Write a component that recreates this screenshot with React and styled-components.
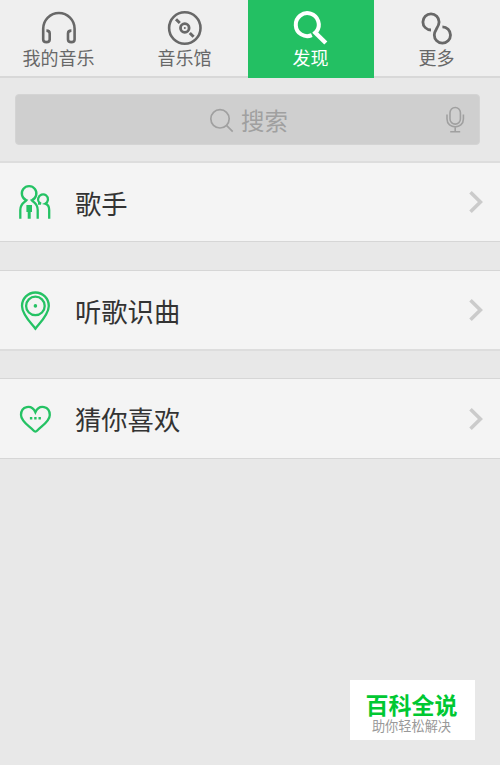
import React from 'react'
import styled, { createGlobalStyle } from 'styled-components'

const GlobalStyle = createGlobalStyle`
    * {
        box-sizing: border-box;
    }

    body {
        margin: 0;
        background: #e8e8e8;
        font-family: "Noto Sans CJK SC", "Noto Sans", sans-serif;
    }
`

const Container = styled.div`
    position: relative;
    height: 765px;
    overflow: hidden;
    background: #e8e8e8;
`

const TabBar = styled.nav`
    display: grid;
    grid-template-columns: 122px 126px 126px 126px;
    height: 78px;
    background: linear-gradient(#efefef 76px, #d8d8d8 76px);
`

const Tab = styled.div`
    display: flex;
    flex-direction: column;
    align-items: center;
    padding-top: 8px;
    height: ${props => (props.$active ? '77.5px' : '76px')};
    color: ${props => (props.$active ? '#ffffff' : '#686868')};
    background: ${props => (props.$active ? '#23c063' : 'transparent')};

    &:first-child {
        padding-right: 4px;
    }
`

const TabIcon = styled.svg`
    width: 40px;
    height: 40px;
    fill: none;
    stroke: currentColor;
    stroke-width: 2.6;
`

const TabLabel = styled.span`
    margin-right: 1px;
    font-size: 18px;
    line-height: 19px;
`

const SearchArea = styled.div`
    padding: 16px 20px 16px 15px;
    height: 83px;
`

const SearchBox = styled.div`
    display: flex;
    align-items: center;
    height: 51px;
    padding: 0 13px 0 193px;
    border: 1px solid #d4d4d4;
    border-radius: 4px;
    background: #cfcfcf;
    color: #a0a0a0;
`

const SearchIcon = styled.svg`
    width: 26px;
    height: 26px;
    fill: none;
    stroke: currentColor;
    stroke-width: 1.7;
`

const Placeholder = styled.span`
    flex: 1;
    margin-left: 6px;
    font-size: 23.4px;
    line-height: 30px;
`

const MicIcon = styled.svg`
    width: 22px;
    height: 30px;
    fill: none;
    stroke: currentColor;
    stroke-width: 1.6;
`

const List = styled.div`
    display: flex;
    flex-direction: column;
`

const Row = styled.div`
    display: flex;
    align-items: center;
    height: 81px;
    margin-bottom: ${props => props.$gap || 0}px;
    padding: 0 15px;
    border-top: ${props => props.$top || 1}px solid ${props => (props.$top ? '#dddddd' : '#d6d6d6')};
    border-bottom: ${props => props.$bottom || 1}px solid ${props => (props.$bottom ? '#dddddd' : '#d6d6d6')};
    background: #f4f4f4;
`

const RowIcon = styled.svg`
    width: 40px;
    height: 44px;
    fill: none;
    stroke: #25c264;
    stroke-width: 2.3;
`

const RowTitle = styled.span`
    flex: 1;
    margin-left: 20px;
    padding-top: 1px;
    font-size: 26.3px;
    line-height: 36px;
    color: #333333;
`

const Chevron = styled.svg`
    width: 18px;
    height: 26px;
    fill: none;
    stroke: #cbcbcb;
    stroke-width: 3.6;
`

const Stamp = styled.div`
    position: absolute;
    left: 350px;
    top: 680px;
    display: flex;
    flex-direction: column;
    align-items: center;
    width: 125px;
    height: 60px;
    padding: 11px 2px 0 0;
    background: #ffffff;
`

const StampName = styled.strong`
    font-size: 23px;
    font-weight: 700;
    line-height: 26px;
    color: #00c832;
`

const StampSlogan = styled.span`
    font-size: 13.2px;
    line-height: 17px;
    color: #999999;
`

const HeadphonesIcon = () => (
    <TabIcon viewBox="39 8 40 40">
        <path d="M46.4 30.6C48.6 30.6 49.7 31.8 49.7 33.5V39.5C49.7 43 43.2 43 43.2 39.5V28.8A15.7 15.8 0 0 1 74.6 28.8V39.5C74.6 43 68 43 68 39.5V33.5C68 31.8 69.2 30.6 71.4 30.6" />
    </TabIcon>
)

const DiscIcon = () => (
    <TabIcon viewBox="165 8 40 40">
        <circle cx="184.8" cy="28" r="15.7" />
        <circle cx="184.8" cy="28" r="4.3" strokeWidth="2.8" />
        <circle cx="184.8" cy="28" r="1" fill="currentColor" stroke="none" />
        <path d="M176 19.2L179.8 23M189.8 33L193.6 36.8" strokeWidth="3" />
    </TabIcon>
)

const DiscoverIcon = () => (
    <TabIcon viewBox="291 8 40 40">
        <path d="M311.8 35.2A11.5 11.5 0 1 1 316.5 31.5" strokeWidth="4" />
        <path d="M313.8 31.2L325.8 43" strokeWidth="4.4" />
    </TabIcon>
)

const MoreIcon = () => (
    <TabIcon viewBox="417 8 40 40">
        <path d="M431 30A8.1 8.1 0 1 1 439.1 21.9C439.1 27 434.3 30 434.3 35A8.1 8.1 0 1 0 442.4 26.9" strokeWidth="2.8" />
    </TabIcon>
)

const SingerIcon = () => (
    <RowIcon viewBox="15 180 40 44">
        <path d="M20.3 218.7V210C20.3 203.5 24 203 26.4 200.2A7.3 7.3 0 1 1 31.8 200.2C34 203 37.7 203.5 37.7 210V218.7" />
        <path d="M38 203.6H41C38 202.4 37.9 199.5 38.3 198.2A4.9 4.9 0 1 1 45.2 203.7C48 204.5 49.2 206.5 49.2 210V218.7" />
        <path d="M26.4 205H32V212H30.7V218.7H27.7V212H26.4Z" fill="#25c264" stroke="none" />
    </RowIcon>
)

const PinIcon = () => (
    <RowIcon viewBox="15 288.5 40 44">
        <path d="M35.4 329.2C31 323.5 22 314.8 22 306.4A13.4 13.4 0 0 1 48.8 306.4C48.8 314.8 39.8 323.5 35.4 329.2Z" />
        <circle cx="35.4" cy="306.4" r="9.3" />
        <circle cx="35.4" cy="306.4" r="1.8" fill="#25c264" stroke="none" />
    </RowIcon>
)

const HeartIcon = () => (
    <RowIcon viewBox="15 397 40 44">
        <path d="M35.4 412.2C31.5 403.8 21 406 21 415C21 421.5 29 425.8 33.5 430.5Q35.4 432.6 37.3 430.5C41.8 425.8 49.8 421.5 49.8 415C49.8 406 39.3 403.8 35.4 412.2Z" />
        <path d="M29.9 418.3H32.3M34.2 418.3H36.6M38.5 418.3H40.9" strokeWidth="2.4" />
    </RowIcon>
)

const tabs = [
    { label: '我的音乐', Icon: HeadphonesIcon },
    { label: '音乐馆', Icon: DiscIcon },
    { label: '发现', Icon: DiscoverIcon, active: true },
    { label: '更多', Icon: MoreIcon },
]

const rows = [
    { title: '歌手', Icon: SingerIcon, top: 2, gap: 28 },
    { title: '听歌识曲', Icon: PinIcon, bottom: 2, gap: 27 },
    { title: '猜你喜欢', Icon: HeartIcon },
]

const App = () => {
    return (
        <>
            <GlobalStyle />
            <Container>
                <TabBar>
                    {tabs.map(({ label, Icon, active }) => (
                        <Tab key={label} $active={active}>
                            <Icon />
                            <TabLabel>{label}</TabLabel>
                        </Tab>
                    ))}
                </TabBar>
                <SearchArea>
                    <SearchBox>
                        <SearchIcon viewBox="209 107 26 26">
                            <circle cx="220" cy="118.8" r="9.2" />
                            <path d="M226.2 125.2L232.7 131.7" />
                        </SearchIcon>
                        <Placeholder>搜索</Placeholder>
                        <MicIcon viewBox="444 105 22 30">
                            <rect x="450" y="107.5" width="10.4" height="16.6" rx="5.2" />
                            <path d="M447 114.5V119C447 129.5 463.4 129.5 463.4 119V114.5M455.2 127V131.8M450.2 131.8H460.2" />
                        </MicIcon>
                    </SearchBox>
                </SearchArea>
                <List>
                    {rows.map(({ title, Icon, top, bottom, gap }) => (
                        <Row key={title} $top={top} $bottom={bottom} $gap={gap}>
                            <Icon />
                            <RowTitle>{title}</RowTitle>
                            <Chevron viewBox="467 189 18 26">
                                <path d="M470.5 192.3L480.4 202L470.5 211.7" />
                            </Chevron>
                        </Row>
                    ))}
                </List>
                <Stamp>
                    <StampName>百科全说</StampName>
                    <StampSlogan>助你轻松解决</StampSlogan>
                </Stamp>
            </Container>
        </>
    )
}

export default App
